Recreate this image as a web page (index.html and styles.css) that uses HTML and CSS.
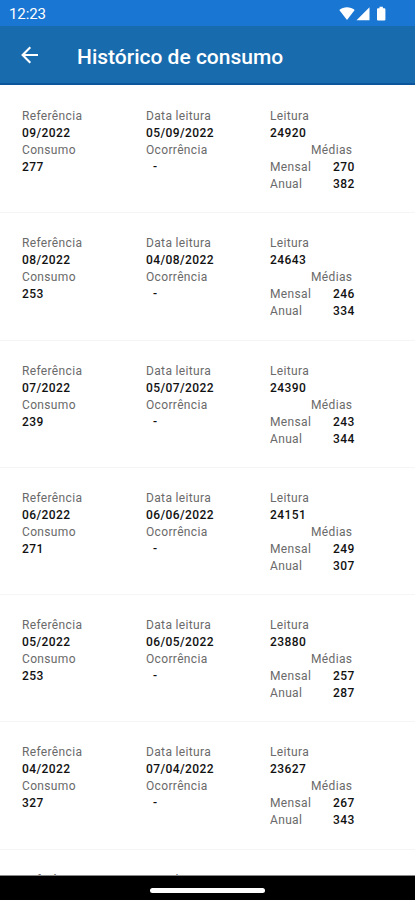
FILE: index.html
```html
<!DOCTYPE html>
<html lang="pt-BR">
<head>
  <meta charset="UTF-8" />
  <meta name="viewport" content="width=device-width, initial-scale=1.0"/>
  <title>Histórico de consumo</title>
  <link rel="stylesheet" href="styles.css">
</head>
<body>
  <div class="screen">
    <div class="status-bar">
      <span class="clock">12:23</span>
      <svg class="status-icons" width="48" height="16" viewBox="0 0 48 16" fill="#fff">
        <path d="M0.3 4C2.500 2.200 5.300 1.200 8 1.200s5.500 1 7.700 2.800L8 14z"/>
        <path d="M30.500 1.200V14.300H17.500z"/>
        <path d="M40.500 0.800h3.400v1.400h1.500a1 1 0 0 1 1 1v10.200a1 1 0 0 1-1 1h-6.400a1 1 0 0 1-1-1v-10.200a1 1 0 0 1 1-1h1.500z"/>
      </svg>
    </div>

    <header class="app-bar">
      <svg class="back" width="18" height="18" viewBox="0 0 18 18" fill="none" stroke="#fff" stroke-width="2.100">
        <path d="M17 9H2M9.300 1.300L1.600 9l7.700 7.700"/>
      </svg>
      <h1>Histórico de consumo</h1>
    </header>

    <main class="list" id="list"></main>

    <footer class="nav-bar">
      <div class="handle"></div>
    </footer>
  </div>

  <script>
    const list = document.getElementById("list");

    const readings = [
      { ref: "09/2022", date: "05/09/2022", reading: 24920, usage: 277, monthly: 270, yearly: 382 },
      { ref: "08/2022", date: "04/08/2022", reading: 24643, usage: 253, monthly: 246, yearly: 334 },
      { ref: "07/2022", date: "05/07/2022", reading: 24390, usage: 239, monthly: 243, yearly: 344 },
      { ref: "06/2022", date: "06/06/2022", reading: 24151, usage: 271, monthly: 249, yearly: 307 },
      { ref: "05/2022", date: "06/05/2022", reading: 23880, usage: 253, monthly: 257, yearly: 287 },
      { ref: "04/2022", date: "07/04/2022", reading: 23627, usage: 327, monthly: 267, yearly: 343 }
    ];

    readings.forEach(renderItem);
    renderNext();

    function renderItem(data) {
      const item = document.createElement("section");
      item.className = "item";
      item.innerHTML = `
        <div class="col">
          <span>Referência</span>
          <strong>${data.ref}</strong>
          <span>Consumo</span>
          <strong>${data.usage}</strong>
        </div>
        <div class="col">
          <span>Data leitura</span>
          <strong>${data.date}</strong>
          <span>Ocorrência</span>
          <strong class="none">-</strong>
        </div>
        <div class="col">
          <span>Leitura</span>
          <strong>${data.reading}</strong>
          <span class="averages">Médias</span>
          <div class="average"><span>Mensal</span><strong>${data.monthly}</strong></div>
          <div class="average"><span>Anual</span><strong>${data.yearly}</strong></div>
        </div>
      `;
      list.appendChild(item);
    }

    // only the labels, the next reading is still below the fold
    function renderNext() {
      const item = document.createElement("section");
      item.className = "item";
      item.innerHTML = "<span>Referência</span><span>Data leitura</span><span>Leitura</span>";
      list.appendChild(item);
    }
  </script>
</body>
</html>
```

FILE: styles.css
```css
* { box-sizing: border-box; }

body {
  margin: 0;
  font-family: Roboto, "Liberation Sans", sans-serif;
  background: #fff;
}

.screen {
  display: flex;
  flex-direction: column;
  height: 900px;
  overflow: hidden;
}

.status-bar {
  display: flex;
  justify-content: space-between;
  align-items: center;
  flex: none;
  height: 26px;
  padding: 2px 28px 0 9px;
  background: #1976d2;
  color: #fff;
}

.clock {
  font-size: 15px;
  letter-spacing: -0.1px;
}

.app-bar {
  display: flex;
  align-items: center;
  flex: none;
  height: 59px;
  padding: 0 21px;
  background: #186bad;
  border-bottom: 2px solid #0b559c;
  color: #fff;
}

h1 {
  margin: 4px 0 0 38px;
  font-size: 21px;
  font-weight: 500;
}

.list {
  flex: 1;
  min-height: 0;
  padding-top: 1px;
  overflow: hidden;
}

.item {
  display: grid;
  grid-template-columns: 124px 124px 1fr;
  height: 127.3px;
  padding: 22px 22px 0;
  border-bottom: 1px solid #f5f5f5;
  font-size: 12px;
  line-height: 17px;
  letter-spacing: 0.35px;
  color: #6a6a6a;
}

.col {
  display: flex;
  flex-direction: column;
}

.item strong {
  font-weight: 500;
  letter-spacing: 0.4px;
  color: #111;
}

.none {
  padding-left: 7px;
}

.averages {
  padding-left: 41px;
}

.average {
  display: grid;
  grid-template-columns: 63px 1fr;
}

.nav-bar {
  display: flex;
  justify-content: center;
  flex: none;
  height: 25px;
  padding-top: 12px;
  background: #000;
  border-top: 1px solid #888;
}

.handle {
  width: 115px;
  height: 5px;
  border-radius: 3px;
  background: #fff;
}
```
